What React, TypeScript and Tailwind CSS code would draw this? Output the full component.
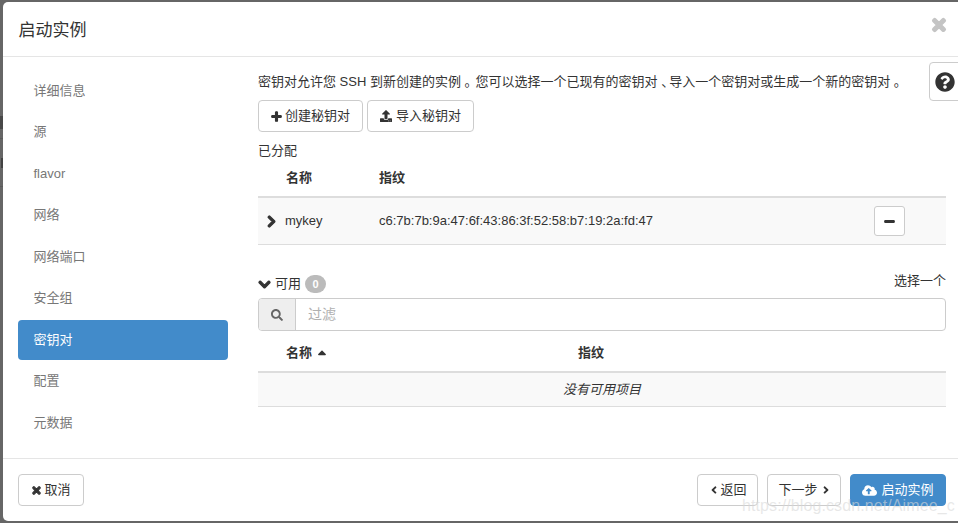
import { FaPlus, FaUpload, FaQuestionCircle, FaTimes, FaChevronRight, FaChevronDown, FaMinus, FaSearch, FaSortUp, FaAngleLeft, FaAngleRight, FaCloudUploadAlt } from "react-icons/fa";

const font = { fontFamily: '"Liberation Sans", "Noto Sans CJK SC", sans-serif' };
const items = ["详细信息", "源", "flavor", "网络", "网络端口", "安全组", "密钥对", "配置", "元数据"];
const btnBase = "flex items-center justify-center h-[32px] rounded-[4px] border text-[13px]";
const btn = btnBase + " border-[#cccccc] bg-white text-[#333333]";
const heavy = { stroke: "currentColor", strokeWidth: 50 };

export default function App() {
  return (
    <div className="relative w-[958px] h-[523px] overflow-hidden bg-[#666666] pt-[2px] pl-[3px]" style={font}>
      <div className="absolute left-0 top-[138px] w-[3px] h-[1px] bg-[#5a5a5a]" />
      <div className="absolute left-0 top-[186px] w-[3px] h-[1px] bg-[#5a5a5a]" />
      <div className="absolute left-0 top-[116px] w-[3px] h-[13px] overflow-hidden bg-[#333333]/60" />
      <div className="absolute left-[1px] top-[158px] w-[2px] h-[10px] bg-[#333333]/70" />
      <div className="relative z-10 flex flex-col w-[960px] h-[519px] bg-white rounded-l-[5px] text-[13px] text-[#333333]">
        <header className="flex items-center justify-between h-[55px] pt-[3px] shrink-0 border-b border-[#e5e5e5] pl-[15.5px] pr-[15px]">
          <h4 className="text-[17px] text-[#333333] leading-[24px]">启动实例</h4>
          <FaTimes className="mb-[11px] text-[#c4c4c4] text-[18px]" style={heavy} />
        </header>
        <div className="relative flex flex-1 min-h-0">
          <nav className="w-[210px] ml-[15px] mt-[14px] flex flex-col gap-[1.5px] shrink-0">
            {items.map((t) => (
              <div
                key={t}
                className={
                  "flex items-center h-[40px] pb-[1px] pl-[15.5px] rounded-[4px] " +
                  (t === "密钥对" ? "bg-[#428bca] text-white" : "text-[#777777]")
                }
              >
                {t}
              </div>
            ))}
          </nav>
          <main className="w-[688px] ml-[30px] pt-[16px]">
            <p className="leading-[18px] h-[18px] whitespace-nowrap">密钥对允许您 SSH 到新创建的实例 <span className="tracking-[-2px]">。</span>您可以选择一个已现有的密钥对 <span className="tracking-[-5px]">、</span>导入一个密钥对或生成一个新的密钥对 。</p>
            <div className="flex gap-[4px] mt-[9px]">
              <button className={btn + " w-[105px] gap-[3px]"}><FaPlus className="text-[11px]" style={heavy} />创建秘钥对</button>
              <button className={btn + " w-[107px] gap-[4px]"}><FaUpload className="text-[12px]" />导入秘钥对</button>
            </div>
            <div className="mt-[10px] h-[18px] leading-[18px]">已分配</div>
            <div className="flex items-center h-[38px] border-b-2 border-[#dddddd] font-bold">
              <span className="w-[121px] pl-[28px]">名称</span>
              <span>指纹</span>
            </div>
            <div className="flex items-center h-[47px] bg-[#f9f9f9] border-b border-[#dddddd]">
              <span className="w-[27px] pl-[7px]"><FaChevronRight className="text-[13px]" style={heavy} /></span>
              <span className="w-[94px]">mykey</span>
              <span className="w-[495px]">c6:7b:7b:9a:47:6f:43:86:3f:52:58:b7:19:2a:fd:47</span>
              <button className="flex items-center justify-center w-[31px] h-[30px] rounded-[3px] border border-[#cccccc] bg-white"><FaMinus className="text-[11px]" style={heavy} /></button>
            </div>
            <div className="flex justify-between mt-[27px] h-[26px]">
              <div className="flex items-center gap-[4px] h-[24px]">
                <FaChevronDown className="text-[13px]" style={heavy} />
                <span>可用</span>
                <span className="flex items-center justify-center w-[21px] h-[18px] rounded-[9px] bg-[#bbbbbb] text-white text-[11px] font-bold">0</span>
              </div>
              <span className="leading-[20px] -mt-[1px]">选择一个</span>
            </div>
            <div className="flex h-[33px] rounded-[4px] border border-[#cccccc] overflow-hidden">
              <div className="flex items-center justify-center w-[37px] bg-[#eeeeee] border-r border-[#cccccc] text-[#666666]"><FaSearch className="text-[12px]" /></div>
              <div className="flex items-center pl-[12px] text-[#b0b0b0] text-[14px]">过滤</div>
            </div>
            <div className="flex items-center h-[42px] pt-[4px] border-b-2 border-[#dddddd] font-bold">
              <span className="flex items-center w-[320px] pl-[28px]">名称<FaSortUp className="ml-[3px] mt-[6px] text-[14px]" /></span>
              <span>指纹</span>
            </div>
            <div className="flex items-center justify-center h-[34px] bg-[#f9f9f9] border-b border-[#dddddd] italic">没有可用项目</div>
          </main>
          <button className="absolute left-[926px] top-[5px] flex items-center pl-[5px] w-[40px] h-[39px] rounded-[4px] border border-[#cccccc] bg-white">
            <FaQuestionCircle className="text-[20px]" />
          </button>
        </div>
        <footer className="flex items-center justify-between h-[63px] shrink-0 border-t border-[#e5e5e5] pl-[15px] pr-[15px]">
          <button className={btn + " w-[66px] gap-[2px]"}><FaTimes className="text-[11px]" style={heavy} />取消</button>
          <div className="flex gap-[9px] pr-[2px]">
            <button className={btn + " w-[61px]"}><FaAngleLeft className="text-[12px]" />返回</button>
            <button className={btn + " w-[74px] pl-[2px]"}>下一步<FaAngleRight className="text-[12px] ml-[2px]" /></button>
            <button className={btnBase + " w-[96px] gap-[4px] bg-[#428bca] border-[#428bca] text-white"}><FaCloudUploadAlt className="text-[15px]" />启动实例</button>
          </div>
        </footer>
      </div>
      <span className="absolute z-20 left-[742px] top-[496px] text-[16px] leading-[20px] tracking-[0.1px] whitespace-nowrap text-[#d8d8d8]/60">https://blog.csdn.net/Aimee_c</span>
    </div>
  );
}
